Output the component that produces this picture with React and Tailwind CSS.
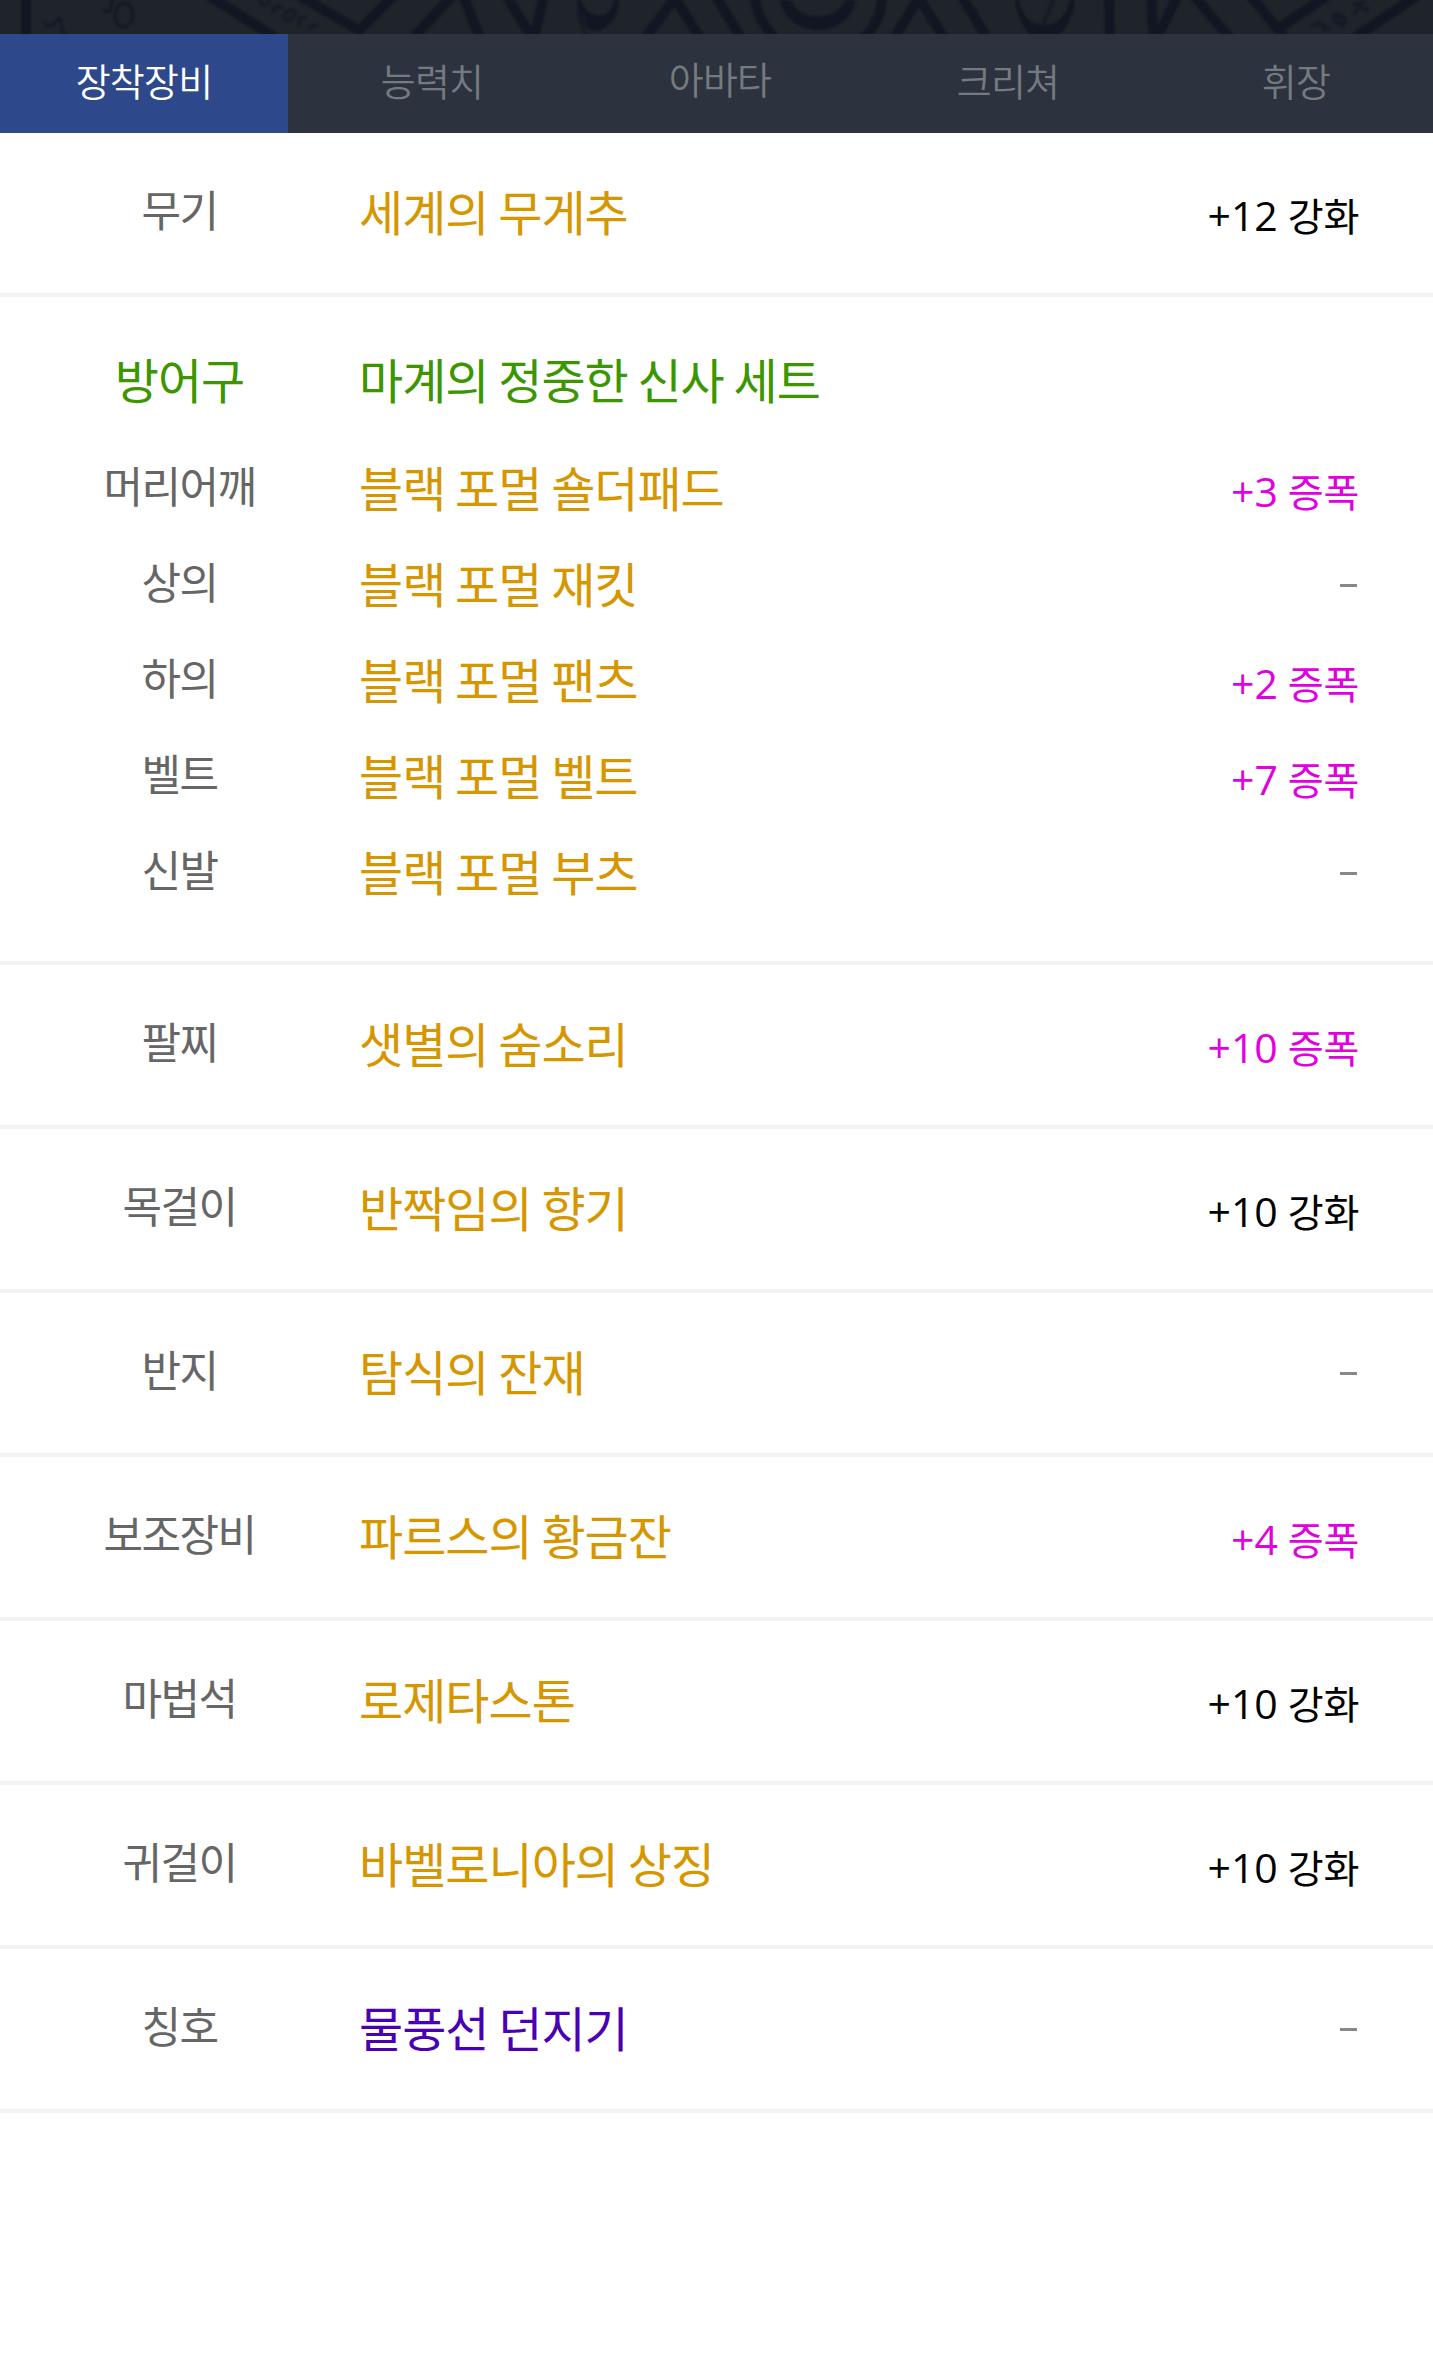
import React from 'react';

const tabs = ['장착장비', '능력치', '아바타', '크리쳐', '휘장'];

const armor = [
  { slot: '머리어깨', name: '블랙 포멀 숄더패드', value: '+3 증폭', type: 'amplify' },
  { slot: '상의', name: '블랙 포멀 재킷' },
  { slot: '하의', name: '블랙 포멀 팬츠', value: '+2 증폭', type: 'amplify' },
  { slot: '벨트', name: '블랙 포멀 벨트', value: '+7 증폭', type: 'amplify' },
  { slot: '신발', name: '블랙 포멀 부츠' },
];

const items = [
  { slot: '팔찌', name: '샛별의 숨소리', value: '+10 증폭', type: 'amplify' },
  { slot: '목걸이', name: '반짝임의 향기', value: '+10 강화' },
  { slot: '반지', name: '탐식의 잔재' },
  { slot: '보조장비', name: '파르스의 황금잔', value: '+4 증폭', type: 'amplify' },
  { slot: '마법석', name: '로제타스톤', value: '+10 강화' },
  { slot: '귀걸이', name: '바벨로니아의 상징', value: '+10 강화' },
  { slot: '칭호', name: '물풍선 던지기', rarity: 'rare' },
];

// Bottom edge of the magic circle behind the character
const CirclePattern = () => (
  <svg className="block h-[34px] w-[1433px] bg-[#1f242a]" viewBox="0 0 1433 34" fill="none">
    <g stroke="#121623" strokeWidth="10" className="blur-[0.8px]">
      <path d="M26 -4V38" />
      <path d="M208 -5L276 38M298 -5L362 32M358 32L394 -5M413 38L453 -5M463 -5L480 38" />
      <path d="M506 -5L532 38M544 -5L534 38M645 38L675 -2L700 38M715 -5L741 38" />
      <path d="M755 -5C755 12 765 28 775 38M882 -5C882 14 874 28 863 38" />
      <path d="M894 38L919 -2L944 38M961 -5L987 38M1109 -5L1110 38" />
      <path d="M1152 -5C1151 12 1153 24 1154 38M1178 -5L1157 38M1193 -5L1230 38" />
      <path d="M1250 -5L1285 38M1278 29L1328 -5M1354 38L1418 -5" />
    </g>
    <g fill="#121623" className="blur-[0.8px]">
      <path d="M780 0C788 40 848 40 856 0L845 0C838 22 798 22 791 0Z" />
      <path d="M577 0C577 14 582 24 590 30C604 34 618 22 619 0L614 0C612 14 601 19 590 13C585 9 582 4 581 0Z" />
      <path d="M1015 0C1017 16 1024 30 1033 38L1056 38C1066 30 1074 15 1075 0L1070 0C1066 16 1056 25 1045 25C1030 25 1021 14 1019 0Z" />
    </g>
    <g stroke="#151a26" strokeWidth="3.5" className="blur-[0.8px]">
      <path d="M45 21C44 30 54 26 60 17M60 19C65 22 57 30 66 34" />
      <path d="M103 10C114 16 110 4 113 -2M116 10C112 22 120 30 128 25C138 16 131 4 125 3C118 3 117 8 116 10" />
      <path d="M262 -2C258 6 266 7 270 0M274 13C271 7 279 4 283 9M284 16C288 7 299 9 294 17C290 22 283 20 284 16M300 27C296 18 302 15 306 19M308 28L317 25" />
      <path d="M578 13L586 36M582 14L588 26" />
      <path d="M1043 25L1054 -3" />
      <path d="M1312 27C1316 21 1323 24 1326 32M1320 23L1330 29M1336 13L1343 27M1335 21C1329 14 1340 12 1344 18C1349 24 1339 27 1335 21M1353 5C1360 0 1363 14 1369 8M1354 14L1364 0" />
    </g>
  </svg>
);

const Upgrade = ({ value, type }) => {
  if (!value) {
    return <div className="mr-[76px] h-[3px] w-[17px] bg-[#888]" />;
  }
  const [level, kind] = value.split(' ');
  return (
    <span
      className={`mr-[74px] flex items-baseline gap-[10px] pt-0.5 text-[39px] leading-[56px] tracking-[-0.3px] whitespace-nowrap ${
        type === 'amplify' ? 'text-[#e000e0]' : 'text-black'
      }`}
    >
      <span className="font-['Open_Sans',sans-serif] text-[41px] tracking-normal">{level}</span>
      <span>{kind}</span>
    </span>
  );
};

const ItemLine = ({ item }) => (
  <>
    <span className="w-[359px] shrink-0 pb-2.5 text-center text-[43px] leading-[60px] tracking-[-1.5px] text-[#666]">
      {item.slot}
    </span>
    <span
      className={`flex-1 pb-1.5 text-[48px] leading-[64px] tracking-[-1px] whitespace-nowrap ${
        item.rarity === 'rare' ? 'text-[#4b00b5]' : 'text-[#d69600]'
      }`}
    >
      {item.name}
    </span>
    <Upgrade value={item.value} type={item.type} />
  </>
);

const ItemRow = ({ item }) => (
  <li className="flex h-[164px] items-center border-b-4 border-[#f2f2f2]">
    <ItemLine item={item} />
  </li>
);

const App = () => {
  return (
    <div className="min-h-[2364px] w-[1433px] overflow-hidden bg-white font-['Noto_Sans_CJK_KR',sans-serif]">
      <CirclePattern />

      <nav className="flex h-[99px] overflow-hidden bg-[#2c323e]">
        {tabs.map((tab, i) => (
          <button
            key={tab}
            className={`flex h-full w-[288px] shrink-0 items-center justify-center text-[38px] font-[350] tracking-[-0.8px] ${
              i === 2 ? 'pb-3' : 'pb-2'
            } ${i === 0 ? 'bg-[#2d498c] text-white' : 'text-[#747b80]'}`}
          >
            {tab}
          </button>
        ))}
      </nav>

      <ul>
        <ItemRow item={{ slot: '무기', name: '세계의 무게추', value: '+12 강화' }} />
        <li className="h-[668px] border-b-4 border-[#f2f2f2] pt-[36px]">
          <div className="flex h-[108px] items-center pb-[18px] text-[48px] leading-[64px] tracking-[-1px] text-[#3b9600]">
            <span className="w-[359px] shrink-0 text-center">방어구</span>
            <span>마계의 정중한 신사 세트</span>
          </div>
          {armor.map((item) => (
            <div key={item.slot} className="flex h-[96px] items-center">
              <ItemLine item={item} />
            </div>
          ))}
        </li>
        {items.map((item) => (
          <ItemRow key={item.slot} item={item} />
        ))}
      </ul>
    </div>
  );
};

export default App;
